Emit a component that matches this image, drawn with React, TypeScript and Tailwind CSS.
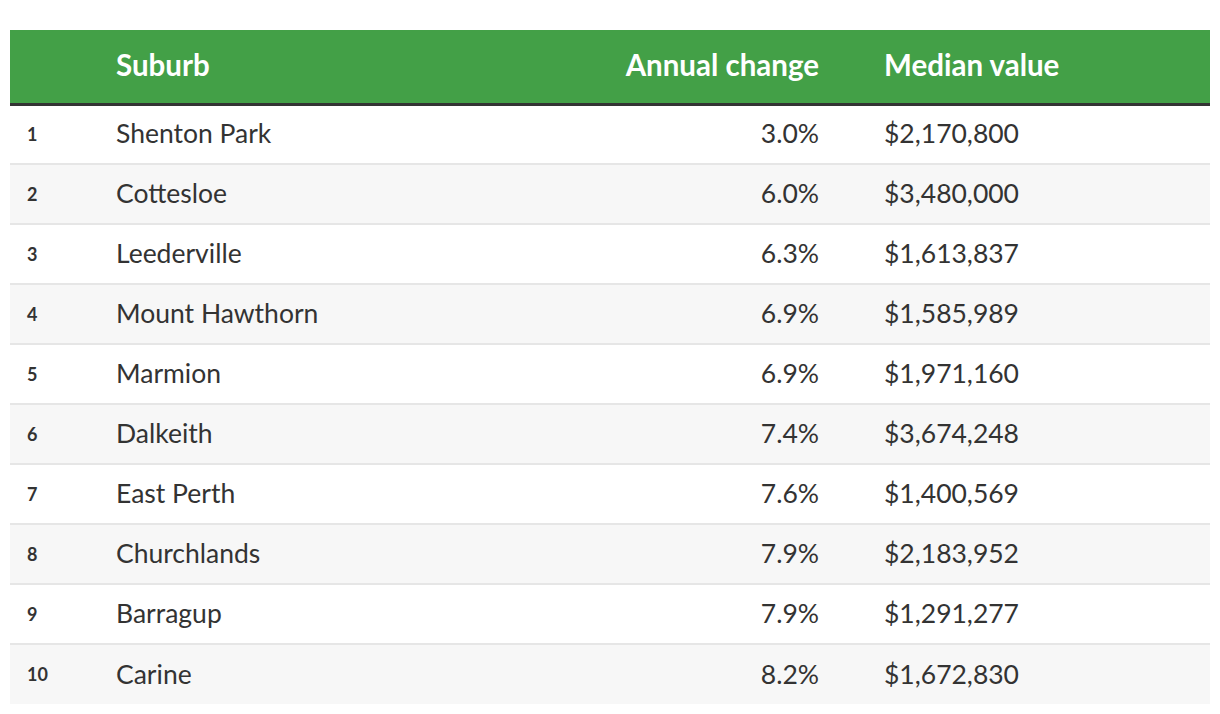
const rows = [
  { rank: 1, suburb: "Shenton Park", change: "3.0%", value: "$2,170,800" },
  { rank: 2, suburb: "Cottesloe", change: "6.0%", value: "$3,480,000" },
  { rank: 3, suburb: "Leederville", change: "6.3%", value: "$1,613,837" },
  { rank: 4, suburb: "Mount Hawthorn", change: "6.9%", value: "$1,585,989" },
  { rank: 5, suburb: "Marmion", change: "6.9%", value: "$1,971,160" },
  { rank: 6, suburb: "Dalkeith", change: "7.4%", value: "$3,674,248" },
  { rank: 7, suburb: "East Perth", change: "7.6%", value: "$1,400,569" },
  { rank: 8, suburb: "Churchlands", change: "7.9%", value: "$2,183,952" },
  { rank: 9, suburb: "Barragup", change: "7.9%", value: "$1,291,277" },
  { rank: 10, suburb: "Carine", change: "8.2%", value: "$1,672,830" },
];

export default function App() {
  return (
    <div className="bg-white min-h-screen pt-[30px] px-[10px] font-['Lato','Noto_Sans',sans-serif] text-[#333]">
      <table className="w-full border-collapse">
        <thead>
          <tr className="bg-[#43a047] text-white border-b-[3px] border-[#333] h-[74px]">
            <th className="w-[106px]" />
            <th className="text-left text-[29.5px] font-bold pb-[2px]">Suburb</th>
            <th className="text-right text-[29.5px] font-bold w-[305px] pb-[2px]">Annual change</th>
            <th className="text-left text-[29.5px] font-bold pl-[65px] w-[391px] pb-[2px]">Median value</th>
          </tr>
        </thead>
        <tbody>
          {rows.map((r, i) => (
            <tr
              key={r.rank}
              className={`h-[60px] ${i % 2 ? "bg-[#f7f7f7]" : "bg-white"} ${i < rows.length - 1 ? "border-b-2 border-[#e6e6e6]" : ""}`}
            >
              <td className="pl-[17px] text-[18px] font-bold">{r.rank}</td>
              <td className="text-[26.5px]">{r.suburb}</td>
              <td className="text-right text-[26.5px]">{r.change}</td>
              <td className="pl-[65px] text-[26.5px]">{r.value}</td>
            </tr>
          ))}
        </tbody>
      </table>
    </div>
  );
}
